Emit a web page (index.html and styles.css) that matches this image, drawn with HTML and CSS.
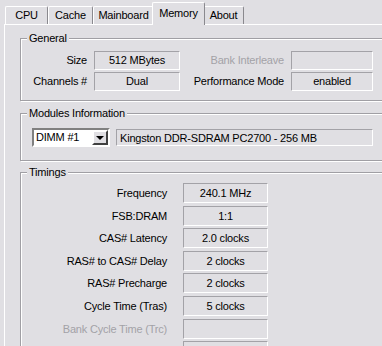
FILE: index.html
```html
<html>
  <head>
    <link rel="stylesheet" href="styles.css">
  </head>
  <body>
    <div class="window">
      <div class="tabs">
        <div class="tab tab-cpu">CPU</div>
        <div class="tab tab-cache">Cache</div>
        <div class="tab tab-main">Mainboard</div>
        <div class="tab tab-mem active">Memory</div>
        <div class="tab tab-about">About</div>
      </div>
      <div class="panel">
        <fieldset class="group general">
          <legend>General</legend>
          <div class="general-grid">
            <span class="lbl">Size</span>
            <span class="box">512 MBytes</span>
            <span class="lbl off">Bank Interleave</span>
            <span class="box"></span>
            <span class="lbl">Channels #</span>
            <span class="box">Dual</span>
            <span class="lbl">Performance Mode</span>
            <span class="box">enabled</span>
          </div>
        </fieldset>

        <fieldset class="group modules">
          <legend>Modules Information</legend>
          <div class="modules-row">
            <div class="combo">
              <span class="combo-text">DIMM #1</span>
              <span class="combo-btn"><span class="arrow"></span></span>
            </div>
            <span class="box module-name">Kingston DDR-SDRAM PC2700 - 256 MB</span>
          </div>
        </fieldset>

        <fieldset class="group timings">
          <legend>Timings</legend>
          <div class="timings-grid">
            <span class="lbl">Frequency</span><span class="box">240.1 MHz</span>
            <span class="lbl">FSB:DRAM</span><span class="box">1:1</span>
            <span class="lbl">CAS# Latency</span><span class="box">2.0 clocks</span>
            <span class="lbl">RAS# to CAS# Delay</span><span class="box">2 clocks</span>
            <span class="lbl">RAS# Precharge</span><span class="box">2 clocks</span>
            <span class="lbl">Cycle Time (Tras)</span><span class="box">5 clocks</span>
            <span class="lbl off">Bank Cycle Time (Trc)</span><span class="box"></span>
            <span class="lbl off"></span><span class="box"></span>
          </div>
        </fieldset>
      </div>
    </div>
  </body>
</html>
```

FILE: styles.css
```css
body {
  margin: 0;
  background: #e0dfe3;
  font-family: "Liberation Sans", Arial, sans-serif;
  font-size: 11px;
  letter-spacing: -0.2px;
  color: #000;
  overflow: hidden;
}

.window {
  width: 400px;
  height: 346px;
}

/* tab strip */
.tabs {
  display: flex;
  align-items: flex-end;
  height: 24px;
  padding-left: 5px;
}

.tab {
  height: 17px;
  line-height: 17px;
  text-align: center;
  border-top: 1px solid #fff;
  border-left: 1px solid #fff;
  border-right: 1px solid #8a898e;
  border-radius: 2px 2px 0 0;
  box-sizing: content-box;
}

.tab-cpu { width: 41px; }
.tab-cache { width: 43px; }
.tab-main { width: 59px; }
.tab-about { width: 39px; }

.tab-mem {
  width: 51px;
  margin: 0 -2px -1px -2px;
}

.tab.active {
  height: 22px;
  line-height: 20px;
  position: relative;
  z-index: 1;
  background: #e0dfe3;
}

.panel {
  margin-left: 4px;
  height: 320px;
  border-top: 1px solid #fff;
  border-left: 1px solid #fff;
  padding-top: 7px;
}

/* etched group boxes */
.group {
  margin: 0 0 0 15px;
  width: 380px;
  padding: 0;
  border: 1px solid #a09fa4;
  box-shadow: inset 1px 1px 0 #fff, 1px 1px 0 #fff;
}

.group legend {
  margin-left: 6px;
  padding: 0 2px;
  line-height: 13px;
  background: #e0dfe3;
}

.lbl {
  text-align: right;
  white-space: nowrap;
  line-height: 19px;
}

.off {
  color: #a3a2a7;
}

.box {
  border-top: 1px solid #a3a2a7;
  border-left: 1px solid #a3a2a7;
  border-right: 1px solid #fff;
  border-bottom: 1px solid #fff;
  text-align: center;
  white-space: nowrap;
}

/* general */
.general-grid {
  display: grid;
  grid-template-columns: 73px 86px 111px 82px;
  grid-auto-rows: 19px;
  row-gap: 2px;
  padding: 6px 0 9px 0;
}

.general-grid .lbl {
  padding-right: 7px;
}

.general-grid .box {
  line-height: 17px;
}

/* modules */
.modules {
  margin-top: 6px;
}

.modules-row {
  display: flex;
  align-items: center;
  gap: 6px;
  padding: 8px 0 13px 11px;
}

.combo {
  display: flex;
  width: 74px;
  height: 15px;
  border: 2px solid;
  border-color: #808080 #fff #fff #808080;
  background: #fff;
}

.combo-text {
  flex: 1;
  padding-left: 2px;
  line-height: 15px;
}

.combo-btn {
  width: 12px;
  height: 11px;
  border: 2px solid;
  border-color: #fff #404040 #404040 #fff;
  background: #e0dfe3;
  display: flex;
  align-items: center;
  justify-content: center;
}

.arrow {
  width: 0;
  height: 0;
  border-left: 4px solid transparent;
  border-right: 4px solid transparent;
  border-top: 4px solid #000;
}

.module-name {
  width: 257px;
  height: 17px;
  line-height: 17px;
  text-align: left;
  padding-left: 3px;
  box-sizing: border-box;
}

/* timings */
.timings {
  margin-top: 5px;
}

.timings-grid {
  display: grid;
  grid-template-columns: 162px 85px;
  grid-auto-rows: 20px;
  row-gap: 2.6px;
  padding-top: 4px;
}

.timings-grid .lbl {
  padding-right: 16px;
  line-height: 20px;
}

.timings-grid .box {
  line-height: 18px;
}
```
